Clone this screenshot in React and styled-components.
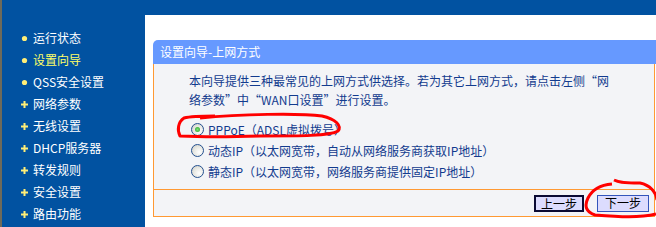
import React, { useState } from "react";
import styled, { createGlobalStyle } from "styled-components";

const GlobalStyle = createGlobalStyle`
  html, body {
    margin: 0;
    padding: 0;
    background: #ffffff;
  }
  body {
    font-family: "Noto Sans CJK SC", "Liberation Sans", sans-serif;
    font-size: 12px;
  }
`;

const Page = styled.div`
  position: relative;
  display: flex;
  width: 656px;
  height: 227px;
  overflow: hidden;
  background: #0152a1;
`;

const Sidebar = styled.nav`
  width: 143px;
  border-left: 2px solid #6e6a5a;
  padding-top: 27px;
  box-sizing: content-box;
`;

const MenuItem = styled.div`
  display: flex;
  align-items: center;
  height: 22px;
  padding-left: 19px;
  gap: 5px;
  color: ${(p) => (p.$active ? "#ffff66" : "#ffffff")};
  font-size: 12px;
  line-height: 22px;
  white-space: nowrap;
`;

const Bullet = styled.span`
  width: 7px;
  height: 7px;
  display: flex;
  align-items: center;
  justify-content: center;
  color: #ffee77;
  svg {
    display: block;
  }
`;

const Main = styled.main`
  flex: 1;
  margin-top: 15px;
  background: #ffffff;
  padding: 25px 0 0 8px;
`;

const Panel = styled.section`
  width: 502px;
`;

const PanelHeader = styled.div`
  height: 24px;
  width: 504px;
  background: #6699ff;
  border-top-left-radius: 5px;
  color: #ffffff;
  font-size: 12px;
  line-height: 24px;
  padding-left: 7px;
  box-sizing: border-box;
`;

const PanelBody = styled.div`
  background: #f3f4f7;
  border-left: 1px solid #ff9933;
  border-right: 1px solid #ff9933;
  border-bottom: 1px solid #ff9933;
  height: 126px;
  padding: 7px 0 0 35px;
  box-sizing: border-box;
`;

const Intro = styled.p`
  margin: 0 0 10px 0;
  width: 426px;
  color: #123b8e;
  font-size: 12px;
  line-height: 19px;
`;

const Option = styled.label`
  display: flex;
  align-items: center;
  height: 21px;
  padding-left: 2px;
  gap: 4px;
  color: #123b8e;
  font-size: 12px;
  cursor: pointer;
`;

const RadioDot = styled.span`
  width: 11px;
  height: 11px;
  border-radius: 50%;
  border: 1px solid #24508f;
  background: radial-gradient(circle at 65% 65%, #ffffff 0%, #e6e6e0 55%, #c8c8c0 100%);
  display: flex;
  align-items: center;
  justify-content: center;
  &::after {
    content: "";
    width: 5px;
    height: 5px;
    border-radius: 50%;
    background: ${(p) => (p.$checked ? "radial-gradient(circle, #7fe07a 0%, #21a121 100%)" : "transparent")};
  }
`;

const PanelFooter = styled.div`
  height: 27px;
  background: #f3f4f7;
  border-left: 1px solid #ff9933;
  border-right: 1px solid #ff9933;
  border-bottom: 1px solid #ff9933;
  box-sizing: border-box;
  display: flex;
  align-items: center;
  justify-content: flex-end;
  gap: 13px;
  padding-right: 5px;
`;

const StepButton = styled.button`
  width: ${(p) => (p.$focused ? "50px" : "52px")};
  height: 17px;
  padding: 0;
  background: #dcdcfe;
  border: ${(p) => (p.$focused ? "2px solid #0a0a33" : "1px solid #3355bb")};
  color: #000000;
  font-family: "Noto Sans CJK SC", sans-serif;
  font-size: 12px;
  line-height: 14px;
  cursor: pointer;
`;

const Marks = styled.svg`
  position: absolute;
  left: 0;
  top: 0;
  pointer-events: none;
`;

const menu = [
  { label: "运行状态", dot: true },
  { label: "设置向导", dot: true, active: true },
  { label: "QSS安全设置", dot: true },
  { label: "网络参数" },
  { label: "无线设置" },
  { label: "DHCP服务器" },
  { label: "转发规则" },
  { label: "安全设置" },
  { label: "路由功能" },
];

const options = [
  "PPPoE（ADSL虚拟拨号）",
  "动态IP（以太网宽带，自动从网络服务商获取IP地址）",
  "静态IP（以太网宽带，网络服务商提供固定IP地址）",
];

const BulletIcon = ({ dot }) =>
  dot ? (
    <svg width="7" height="7" viewBox="0 0 7 7">
      <circle cx="3.5" cy="3.5" r="2.6" fill="#ffee77" />
    </svg>
  ) : (
    <svg width="7" height="7" viewBox="0 0 7 7">
      <path d="M2.5 0h2v2.5H7v2H4.5V7h-2V4.5H0v-2h2.5z" fill="#ffee77" />
    </svg>
  );

const App = () => {
  const [choice, setChoice] = useState(0);

  return (
    <Page>
      <GlobalStyle />
      <Sidebar>
        {menu.map((item) => (
          <MenuItem key={item.label} $active={item.active}>
            <Bullet>
              <BulletIcon dot={item.dot} />
            </Bullet>
            {item.label}
          </MenuItem>
        ))}
      </Sidebar>
      <Main>
        <Panel>
          <PanelHeader>设置向导-上网方式</PanelHeader>
          <PanelBody>
            <Intro>
              本向导提供三种最常见的上网方式供选择。若为其它上网方式，请点击左侧“网络参数”中“WAN口设置”进行设置。
            </Intro>
            {options.map((text, i) => (
              <Option key={text} onClick={() => setChoice(i)}>
                <RadioDot $checked={choice === i} />
                {text}
              </Option>
            ))}
          </PanelBody>
          <PanelFooter>
            <StepButton $focused>上一步</StepButton>
            <StepButton>下一步</StepButton>
          </PanelFooter>
        </Panel>
      </Main>
      <Marks width="656" height="227" viewBox="0 0 656 227">
        <path
          d="M200 118 C240 114 300 113 322 116 C336 119 342 126 338 131 C330 136 300 136 260 136 C230 137 200 137 180 136 C177 130 178 122 184 118 C192 116 205 116 215 116"
          fill="none"
          stroke="#ff0000"
          strokeWidth="3"
          strokeLinejoin="round"
        />
        <path
          d="M614 180 C618 182 622 183 640 183 C650 185 656 192 657 200 M656 214 C640 218 620 217 595 215 C586 212 584 206 588 198 C592 190 600 185 612 184"
          fill="none"
          stroke="#ff0000"
          strokeWidth="3"
          strokeLinejoin="round"
        />
      </Marks>
    </Page>
  );
};

export default App;
